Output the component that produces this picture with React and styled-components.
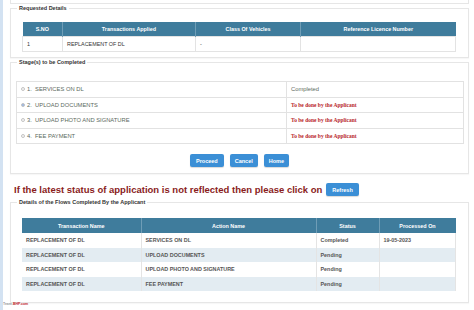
import React from 'react';
import styled, { createGlobalStyle } from 'styled-components';

const GlobalStyle = createGlobalStyle`
  html, body {
    margin: 0;
    padding: 0;
    background: #fff;
    font-family: "Liberation Sans", Arial, sans-serif;
  }
`;

const Page = styled.div`
  position: relative;
  width: 474px;
  height: 310px;
  overflow: hidden;
  box-sizing: border-box;
  border-left: 3px solid #d3e2f2;
  padding: 0 5px 0 7px;
`;

const PrevBox = styled.div`
  height: 3px;
  border: 1px solid #e6e6e6;
  border-top: none;
`;

const Fieldset = styled.fieldset`
  margin: 0;
  padding: ${p => p.$pad};
  border: 1px solid #e6e6e6;
  min-width: 0;
  box-shadow: 0 1px 1px rgba(0, 0, 0, 0.03);
`;

const Legend = styled.legend`
  margin-left: 6px;
  padding: 0 2px;
  font-size: 5.5px;
  line-height: 8px;
  font-weight: bold;
  color: #333;
`;

const Table = styled.table`
  width: calc(100% - ${p => p.$inset}px);
  margin: 0 ${p => p.$right}px 0 ${p => p.$left}px;
  border-collapse: collapse;
  table-layout: fixed;
  font-size: 5.4px;
`;

const Th = styled.th`
  background: #3f7c9c;
  color: #fff;
  font-weight: bold;
  height: ${p => p.$h}px;
  padding: 0 3px;
  text-align: center;
  border-right: 1px solid #6f9db6;
  &:last-child { border-right: none; }
`;

const Td = styled.td`
  height: ${p => p.$h}px;
  padding: 0 4px;
  color: ${p => p.$color || '#333'};
  font-weight: ${p => (p.$bold ? 'bold' : 'normal')};
  border: 1px solid #e3e3e3;
  white-space: nowrap;
`;

const FlowRow = styled.tr`
  background: ${p => (p.$striped ? '#e3ecf2' : '#fff')};
`;

const FlowTd = styled.td`
  height: 14.5px;
  padding: 0 4px;
  color: #555;
  font-weight: bold;
  border-right: 1px solid #e4e4e4;
  white-space: nowrap;
`;

const StageTd = styled.td`
  height: 14.5px;
  padding: 0 4px;
  border: 1px solid #e2e2e2;
  color: #5d6a60;
  font-size: 5.8px;
  white-space: nowrap;
`;

const StageLabel = styled.span`
  display: inline-flex;
  align-items: center;
  gap: 2px;
`;

const Radio = styled.span`
  width: 4px;
  height: 4px;
  border-radius: 50%;
  border: 0.5px solid #c4c4c4;
  background: ${p => (p.$checked ? 'radial-gradient(circle, #2f6fd0 45%, #fff 55%)' : '#f7f7f7')};
  box-sizing: border-box;
`;

const Pending = styled.span`
  font-family: "Liberation Serif", "Times New Roman", serif;
  font-weight: bold;
  font-size: 5.5px;
  color: #b8262b;
`;

const ButtonRow = styled.div`
  display: flex;
  justify-content: center;
  gap: 6px;
  margin-top: 10px;
`;

const Button = styled.button`
  height: 13px;
  padding: 0 ${p => p.$px || 5}px;
  border: none;
  border-radius: 2px;
  background: #3b8fd6;
  color: #fff;
  font-family: "Liberation Sans", Arial, sans-serif;
  font-size: 5.5px;
  font-weight: bold;
  box-shadow: 0 1px 1px rgba(0, 0, 0, 0.15);
`;

const Notice = styled.div`
  display: flex;
  align-items: center;
  gap: 4px;
  margin: 9px 0 2px 4px;
  height: 13px;
`;

const NoticeText = styled.span`
  font-size: 9.5px;
  font-weight: bold;
  color: #8a1c1c;
`;

const Watermark = styled.div`
  position: absolute;
  left: 0;
  bottom: 4px;
  font-size: 3.5px;
  font-weight: bold;
  color: #9a9a9a;
  span { color: #c0282d; }
`;

const stages = [
  { n: '1.', label: 'SERVICES ON DL', done: true },
  { n: '2.', label: 'UPLOAD DOCUMENTS', checked: true },
  { n: '3.', label: 'UPLOAD PHOTO AND SIGNATURE' },
  { n: '4.', label: 'FEE PAYMENT' },
];

const flows = [
  ['SERVICES ON DL', 'Completed', '19-05-2023'],
  ['UPLOAD DOCUMENTS', 'Pending', ''],
  ['UPLOAD PHOTO AND SIGNATURE', 'Pending', ''],
  ['FEE PAYMENT', 'Pending', ''],
];

export default function App() {
  return (
    <>
      <GlobalStyle />
      <Page>
        <PrevBox />

        <Fieldset $pad="10px 0 5px">
          <Legend>Requested Details</Legend>
          <Table $inset={23} $left={11} $right={12}>
            <colgroup>
              <col style={{ width: 40 }} />
              <col style={{ width: 133 }} />
              <col style={{ width: 105 }} />
              <col />
            </colgroup>
            <thead>
              <tr>
                <Th $h={14}>S.NO</Th>
                <Th $h={14}>Transactions Applied</Th>
                <Th $h={14}>Class Of Vehicles</Th>
                <Th $h={14}>Reference Licence Number</Th>
              </tr>
            </thead>
            <tbody>
              <tr>
                <Td $h={14}>1</Td>
                <Td $h={14}>REPLACEMENT OF DL</Td>
                <Td $h={14}>-</Td>
                <Td $h={14}></Td>
              </tr>
            </tbody>
          </Table>
        </Fieldset>

        <Fieldset $pad="15px 0 6px">
          <Legend>Stage(s) to be Completed</Legend>
          <Table $inset={9} $left={5} $right={4}>
            <colgroup>
              <col style={{ width: 270 }} />
              <col />
            </colgroup>
            <tbody>
              {stages.map(s => (
                <tr key={s.n}>
                  <StageTd>
                    <StageLabel>
                      <Radio $checked={s.checked} />
                      {s.n}&nbsp; {s.label}
                    </StageLabel>
                  </StageTd>
                  <StageTd>
                    {s.done ? 'Completed' : <Pending>To be done by the Applicant</Pending>}
                  </StageTd>
                </tr>
              ))}
            </tbody>
          </Table>
          <ButtonRow>
            <Button $px={6}>Proceed</Button>
            <Button $px={5}>Cancel</Button>
            <Button $px={5}>Home</Button>
          </ButtonRow>
        </Fieldset>

        <Notice>
          <NoticeText>If the latest status of application is not reflected then please click on</NoticeText>
          <Button $px={6}>Refresh</Button>
        </Notice>

        <Fieldset $pad="12px 0 11px">
          <Legend>Details of the Flows Completed By the Applicant</Legend>
          <Table $inset={23} $left={11} $right={12}>
            <colgroup>
              <col style={{ width: 119 }} />
              <col style={{ width: 175 }} />
              <col style={{ width: 63 }} />
              <col />
            </colgroup>
            <thead>
              <tr>
                <Th $h={15}>Transaction Name</Th>
                <Th $h={15}>Action Name</Th>
                <Th $h={15}>Status</Th>
                <Th $h={15}>Processed On</Th>
              </tr>
            </thead>
            <tbody>
              {flows.map((f, i) => (
                <FlowRow key={f[0]} $striped={i % 2 === 1}>
                  <FlowTd>REPLACEMENT OF DL</FlowTd>
                  <FlowTd>{f[0]}</FlowTd>
                  <FlowTd>{f[1]}</FlowTd>
                  <FlowTd>{f[2]}</FlowTd>
                </FlowRow>
              ))}
            </tbody>
          </Table>
        </Fieldset>

        <Watermark>Team-<span>BHP.com</span></Watermark>
      </Page>
    </>
  );
}
